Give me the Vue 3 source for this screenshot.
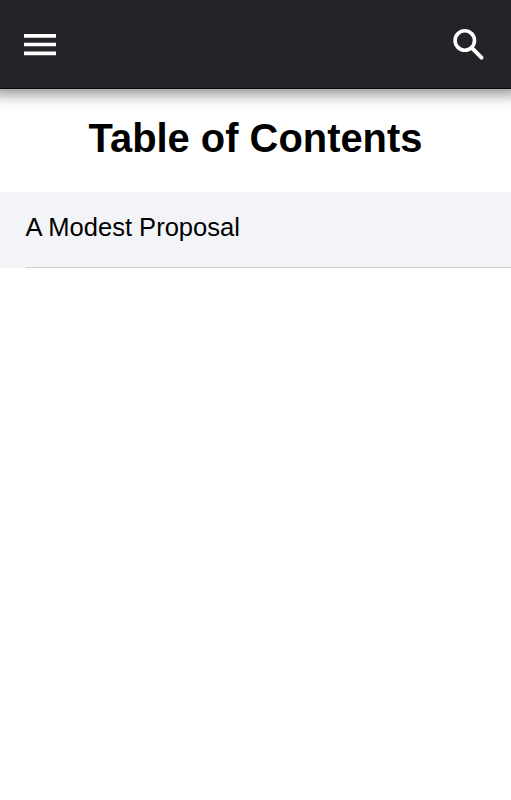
<template>
  <div class="page">
    <header class="toolbar">
      <button class="icon-btn" aria-label="Menu">
        <svg viewBox="0 0 42 42"><path d="M5 12.8h32M5 21.5h32M5 30.3h32" stroke-width="3.7" /></svg>
      </button>
      <button class="icon-btn" aria-label="Search">
        <svg viewBox="0 0 42 42">
          <circle cx="14.8" cy="17.5" r="9.7" stroke-width="3.6" />
          <path d="M21.8 24.8L31.5 34.6" stroke-width="4" stroke-linecap="round" />
        </svg>
      </button>
    </header>
    <main>
      <h1>Table of Contents</h1>
      <ul class="list">
        <li v-for="title in chapters" :key="title" class="item">
          <div class="item-inner">{{ title }}</div>
        </li>
      </ul>
    </main>
  </div>
</template>

<script setup>
const chapters = ['A Modest Proposal']
</script>

<style>
body {
  margin: 0;
  background: #fff;
}
</style>

<style scoped>
.page {
  min-height: 100vh;
  overflow: hidden;
  font-family: "Liberation Sans", Arial, sans-serif;
  color: #000;
}
.toolbar {
  display: flex;
  align-items: center;
  justify-content: space-between;
  box-sizing: border-box;
  height: 89px;
  padding: 0 19px;
  background: #222428;
  border-bottom: 1px solid #08090e;
  box-shadow: 0 -4px 14px 9px rgba(0, 0, 0, 0.46);
}
.icon-btn {
  display: flex;
  padding: 0;
  border: 0;
  background: none;
}
.icon-btn svg {
  width: 42px;
  height: 42px;
  fill: none;
  stroke: #fff;
}
h1 {
  margin: 0;
  padding-top: 26px;
  height: 77px;
  font-size: 39.9px;
  line-height: 46px;
  text-align: center;
}
.list {
  margin: 0;
  padding: 0;
  list-style: none;
}
.item {
  padding-left: 25.5px;
  background: #f3f4f8;
}
.item-inner {
  height: 75px;
  border-bottom: 1px solid #cdcfd1;
  font-size: 25.55px;
  line-height: 71px;
}
</style>
